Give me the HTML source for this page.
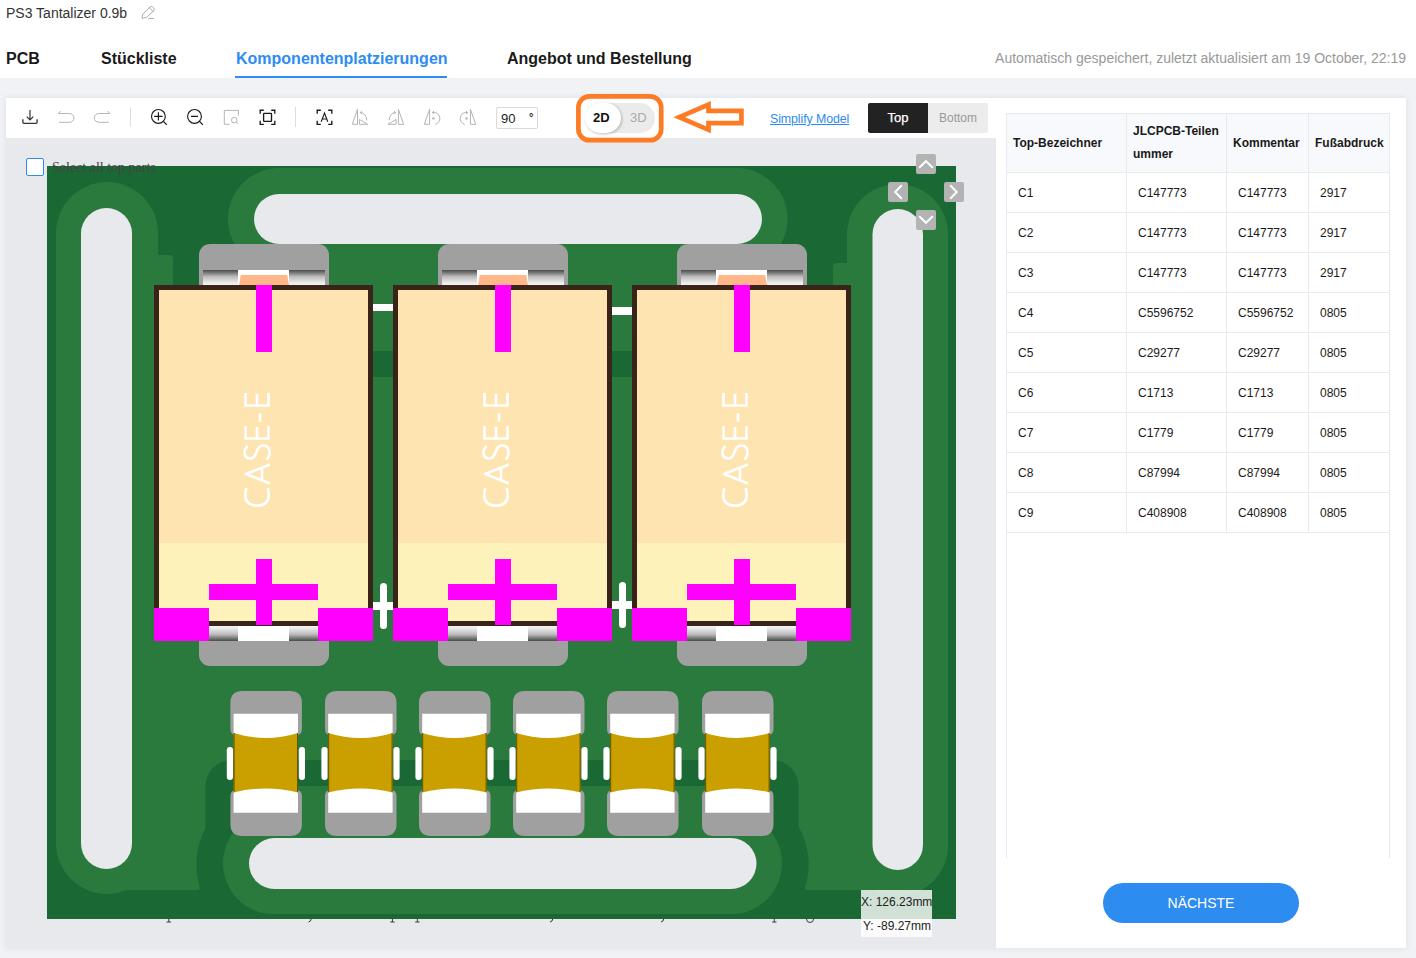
<!DOCTYPE html>
<html><head><meta charset="utf-8">
<style>
*{margin:0;padding:0;box-sizing:border-box}
html,body{width:1416px;height:958px;overflow:hidden;background:#f0f2f5;font-family:"Liberation Sans",sans-serif;color:#1a1a1a}
.a{position:absolute;white-space:nowrap}
#hdr{position:absolute;left:0;top:0;width:1416px;height:78px;background:#fff}
.tab{position:absolute;top:50px;font-size:16px;font-weight:bold;color:#1a1a1a;line-height:18px}
#tb{position:absolute;left:6px;top:98px;width:990px;height:40px;background:#fff}
#rp{position:absolute;left:996px;top:98px;width:410px;height:850px;background:#fff}
#cv{position:absolute;left:6px;top:138px;width:990px;height:810px;background:#e8e9ed}
table{border-collapse:collapse;position:absolute;left:10px;top:15px;width:383px;table-layout:fixed}
th,td{border:1px solid #e8eaec;text-align:left;font-size:12px}
th{background:#f7f9fc;font-weight:bold;height:59px;padding:0 6px;line-height:23px;vertical-align:middle}
td{height:40px;padding:0 0 0 11px}
</style></head><body>
<div id="hdr">
  <div class="a" style="left:6px;top:5px;font-size:14px;color:#333;line-height:16px">PS3 Tantalizer 0.9b</div>
  <svg class="a" style="left:136px;top:0px" width="24" height="24" viewBox="136 0 24 24"><path d="M142 18.2 L142.6 14.4 L150 7 Q151.4 5.8 152.7 7 L153.8 8.1 Q155 9.4 153.8 10.6 L146.3 17.6 Z M149.3 7.7 L153.1 11.5 M148.4 18.5 H153.8" fill="none" stroke="#ababab" stroke-width="1"/></svg>
  <div class="tab" style="left:6px">PCB</div>
  <div class="tab" style="left:101px">Stückliste</div>
  <div class="tab" style="left:236px;color:#2d8cf0">Komponentenplatzierungen</div>
  <div class="a" style="left:235px;top:76px;width:212px;height:2px;background:#2d8cf0"></div>
  <div class="tab" style="left:507px">Angebot und Bestellung</div>
  <div class="a" style="right:10px;top:50px;font-size:14px;color:#999;line-height:16px">Automatisch gespeichert, zuletzt aktualisiert am 19 October, 22:19</div>
</div>
<div class="a" style="left:6px;top:98px;width:990px;height:850px;box-shadow:0 0 7px rgba(10,30,80,0.09)"></div>
<div class="a" style="left:996px;top:98px;width:410px;height:850px;box-shadow:0 0 7px rgba(10,30,80,0.09)"></div>
<div id="tb">
<svg class="a" style="left:0;top:0" width="990" height="40" viewBox="6 98 990 40">
<g fill="none" stroke="#333" stroke-width="1.2">
<path d="M30 110 V120.3 M26.7 116.6 L30 119.9 L33.3 116.6"/>
<path d="M22.9 119.2 V122.3 Q22.9 123.4 24 123.4 H36 Q37.1 123.4 37.1 122.3 V119.2" stroke-width="1.3"/>
</g>
<g fill="none" stroke="#b4b4b4" stroke-width="1">
<path d="M60.8 111 L58.3 113.5 H69.5 A4.4 4.4 0 0 1 69.5 122.3 H59"/>
<path d="M107.4 111 L109.9 113.5 H98.7 A4.4 4.4 0 0 0 98.7 122.3 H108.8"/>
</g>
<rect x="130" y="107.5" width="1" height="19" fill="#ddd"/>
<rect x="295" y="107" width="1" height="20" fill="#ddd"/>
<g fill="none" stroke="#1a1a1a" stroke-width="1.15">
<circle cx="158.4" cy="116.4" r="6.9"/><path d="M163.5 121.5 L166.8 124.8 M154.2 116.4 H162.6 M158.4 112.2 V120.6"/>
<circle cx="194.5" cy="116.4" r="6.9"/><path d="M199.6 121.5 L202.9 124.8 M191 116.4 H198"/>
</g>
<g fill="none" stroke="#1a1a1a" stroke-width="1.35">
<path d="M260.2 113.8 V110.2 H263.8 M271.2 110.2 H274.8 V113.8 M274.8 120.8 V124.4 H271.2 M263.8 124.4 H260.2 V120.8"/>
<rect x="263.6" y="113.4" width="7.9" height="8" rx="0.6"/>
<path d="M317.2 113.8 V110.2 H320.8 M328.2 110.2 H331.8 V113.8 M331.8 120.8 V124.4 H328.2 M320.8 124.4 H317.2 V120.8"/>
<path d="M321.2 121.8 L324.5 113 L327.8 121.8 M322.3 119 H326.7" stroke-width="1.1"/>
</g>
<g fill="none" stroke="#b4b4b4" stroke-width="1">
<path d="M224.3 124.3 V110.4 H238.5 V115.5 M224.3 124.3 H229.4"/><circle cx="234.3" cy="120.1" r="2.8"/><path d="M236.3 122.1 L238.5 124.3"/>
<path d="M357.5 109.3 L352.3 124.3 H357.5 Z M359.4 119.4 V124.3 H367.6 Z M366.7 120.3 A6 7.5 0 0 0 360.2 112.6 M360.2 112.6 L361.8 111 M360.2 112.6 L362.2 113.8"/>
<path d="M398.4 109.3 L403.6 124.3 H398.4 Z M396 119.4 V124.3 H388 Z M389.2 120.3 A6 7.5 0 0 1 395.7 112.6 M395.7 112.6 L394.1 111 M395.7 112.6 L393.7 113.8"/>
<path d="M429.6 109.3 L424.3 124.3 H429.6 Z M432.3 112.6 A5.8 5.8 0 0 1 435.3 124.3 M432.3 112.6 L434 111 M432.3 112.6 L434.2 114"/>
<path d="M470.4 109.3 L475.7 124.3 H470.4 Z M467.7 112.6 A5.8 5.8 0 0 0 464.7 124.3 M467.7 112.6 L466 111 M467.7 112.6 L465.8 114"/>
</g>
<circle cx="433.4" cy="118.4" r="1.2" fill="#b4b4b4"/>
<circle cx="466.6" cy="118.4" r="1.2" fill="#b4b4b4"/>
</svg>
<div class="a" style="left:490px;top:9px;width:42px;height:22px;border:1px solid #d9d9d9;border-radius:2px;font-size:13px;line-height:22px;padding-left:4px;color:#222">90</div>
<div class="a" style="left:523px;top:13px;font-size:11px;font-weight:bold;color:#222">°</div>
<div class="a" style="left:579px;top:5px;width:70px;height:30px;border-radius:15px;background:#ebebeb"></div>
<div class="a" style="left:579px;top:5px;width:36px;height:30px;border-radius:15px;background:#fff;box-shadow:1px 1px 3px rgba(0,0,0,0.25)"></div>
<div class="a" style="left:587px;top:12px;font-size:13px;font-weight:bold;color:#111;line-height:15px">2D</div>
<div class="a" style="left:624px;top:12px;font-size:13px;color:#aaa;line-height:15px">3D</div>

<div class="a" style="left:764px;top:14px;font-size:12.4px;letter-spacing:-0.1px;color:#2d8cf0;text-decoration:underline;line-height:15px">Simplify Model</div>
<div class="a" style="left:862px;top:5px;width:60px;height:30px;background:#222;border-radius:2px 0 0 2px;color:#fff;font-size:13px;font-weight:normal;-webkit-text-stroke:0.25px #fff;text-align:center;line-height:30px">Top</div>
<div class="a" style="left:922px;top:5px;width:60px;height:30px;background:#ececec;border-radius:0 2px 2px 0;color:#999;font-size:12px;text-align:center;line-height:30px">Bottom</div>
</div>
<div id="cv"></div>
<svg class="a" style="left:140px;top:915px" width="700" height="12" viewBox="140 915 700 12"><g fill="none" stroke="#3a3a3a" stroke-width="1">
<path d="M168.8 918 V922 M166.6 922 H171"/>
<path d="M417.4 918 V922 M415.2 922 H419.6"/><path d="M392.4 918 V922 M390.2 922 H394.6"/>
<path d="M774.3 918 V922 M772.1 922 H776.5"/>
<path d="M311.5 918 Q311 922 308.5 922"/><path d="M553 918 Q552.5 922 550 922"/><path d="M664 918 Q663.5 922 661 922"/>
<path d="M806.5 919 Q806.5 922.5 810 922.5 Q813.5 922.5 813.5 919"/>
</g></svg>
<svg class="a" style="left:6px;top:138px" width="990" height="810" viewBox="6 138 990 810"><defs>
<linearGradient id="gt" x1="0" y1="0" x2="0" y2="1"><stop offset="0" stop-color="#4a4a4a"/><stop offset="0.45" stop-color="#bdbdbd"/><stop offset="0.85" stop-color="#ebebeb"/><stop offset="1" stop-color="#f4f4f4"/></linearGradient>
<linearGradient id="gb" x1="0" y1="1" x2="0" y2="0"><stop offset="0" stop-color="#4a4a4a"/><stop offset="0.45" stop-color="#bdbdbd"/><stop offset="0.85" stop-color="#ebebeb"/><stop offset="1" stop-color="#f4f4f4"/></linearGradient>
</defs><rect x="47" y="166" width="909" height="753" fill="#1a6833" /><rect x="158" y="285" width="689" height="605" fill="#2b7a3d" /><rect x="107" y="843" width="790" height="47" fill="#2b7a3d" /><path d="M158 285 V255 H169 Q173 255 173 259 V285 Z" fill="#2b7a3d"/><path d="M847 285 V263 H837 Q833 263 833 267 V285 Z" fill="#2b7a3d"/><rect x="212" y="244" width="581" height="41" fill="#2b7a3d" /><rect x="373" y="351" width="20" height="26" fill="#1a6833" /><rect x="612" y="351" width="20" height="26" fill="#1a6833" /><rect x="231" y="760" width="542" height="26" fill="#1a6833" /><path d="M231.5 760 H240 V918 H199 V890 L200 888 A77 77 0 0 1 205.5 828 V786 A26 26 0 0 1 231.5 760 Z" fill="#1a6833"/><path d="M772.5 760 H765 V918 H806 V890 L805 888 A77 77 0 0 0 798.5 826.5 V786 A26 26 0 0 0 772.5 760 Z" fill="#1a6833"/><rect x="56" y="182" width="102" height="712" rx="51.0" fill="#2b7a3d"/><rect x="228" y="168" width="559.5" height="102" rx="51.0" fill="#2b7a3d"/><rect x="847" y="184" width="101" height="712" rx="50.5" fill="#2b7a3d"/><rect x="223" y="812.5" width="559" height="101.5" rx="50.75" fill="#2b7a3d"/><rect x="81" y="208" width="51" height="661" rx="25.5" fill="#e8e9ed"/><rect x="254" y="194" width="508" height="50" rx="25.0" fill="#e8e9ed"/><rect x="872.5" y="209" width="50.5" height="661" rx="25.25" fill="#e8e9ed"/><rect x="249" y="838" width="507.5" height="51" rx="25.5" fill="#e8e9ed"/><g transform="translate(0 0)"><rect x="199" y="244" width="130" height="60" rx="11" fill="#a0a0a0"/><rect x="199" y="606" width="130" height="60" rx="11" fill="#a0a0a0"/><rect x="203" y="270" width="35" height="15" fill="url(#gt)" /><rect x="289" y="270" width="36" height="15" fill="url(#gt)" /><rect x="238" y="270" width="51" height="15" fill="#fff" /><path d="M240.8 275 H287.2 L289 285 H239 Z" fill="#ffb78a"/><rect x="209" y="626" width="29" height="15" fill="url(#gb)" /><rect x="289" y="626" width="29" height="15" fill="url(#gb)" /><rect x="238" y="626" width="51" height="15" fill="#fff" /><rect x="154" y="285" width="219" height="341" fill="#3a241a" /><rect x="159" y="290" width="209" height="253" fill="#fee4b0" /><rect x="159" y="543" width="209" height="78" fill="#fef2bb" /><rect x="256" y="285" width="16" height="67" fill="#ff00ff" /><rect x="209" y="584" width="109" height="16" fill="#ff00ff" /><rect x="256" y="559" width="16" height="66" fill="#ff00ff" /><rect x="154" y="608" width="55" height="33" fill="#ff00ff" /><rect x="318" y="608" width="55" height="33" fill="#ff00ff" /><g transform="translate(244 507) rotate(-90)"><g fill="none" stroke="#fff" stroke-width="2.7" stroke-linejoin="round">
<path d="M18.8 2.4 C17 1.6 14 1.3 11 1.3 C5 1.3 1.3 6 1.3 13 C1.3 20 5 24.7 11 24.7 C14 24.7 17 24.4 18.8 23.6"/>
<path d="M23.5 26 L33 2 L42.5 26 M26.5 18 L39.5 18"/>
<path d="M61 3.5 C59 1.5 56.5 0.5 54.5 0.5 C50.5 0.5 48.5 3 48.5 6.5 C48.5 14 61.5 11 61.5 19 C61.5 23 59 25.5 54.5 25.5 C51.5 25.5 49 24.5 47.5 22.5"/>
<path d="M81 1.5 L68.5 1.5 L68.5 24.5 L81 24.5 M68.5 13 L80 13"/>
<path d="M85.3 16 L93.7 16"/>
<path d="M114 1.5 L101.5 1.5 L101.5 24.5 L114 24.5 M101.5 13 L113 13"/>
</g></g><rect x="373" y="304" width="20" height="7" fill="#fff" /><rect x="380" y="583" width="7" height="46" rx="3.5" fill="#fff"/><rect x="373" y="602" width="20" height="8" fill="#fff" /></g><g transform="translate(239 0)"><rect x="199" y="244" width="130" height="60" rx="11" fill="#a0a0a0"/><rect x="199" y="606" width="130" height="60" rx="11" fill="#a0a0a0"/><rect x="203" y="270" width="35" height="15" fill="url(#gt)" /><rect x="289" y="270" width="36" height="15" fill="url(#gt)" /><rect x="238" y="270" width="51" height="15" fill="#fff" /><path d="M240.8 275 H287.2 L289 285 H239 Z" fill="#ffb78a"/><rect x="209" y="626" width="29" height="15" fill="url(#gb)" /><rect x="289" y="626" width="29" height="15" fill="url(#gb)" /><rect x="238" y="626" width="51" height="15" fill="#fff" /><rect x="154" y="285" width="219" height="341" fill="#3a241a" /><rect x="159" y="290" width="209" height="253" fill="#fee4b0" /><rect x="159" y="543" width="209" height="78" fill="#fef2bb" /><rect x="256" y="285" width="16" height="67" fill="#ff00ff" /><rect x="209" y="584" width="109" height="16" fill="#ff00ff" /><rect x="256" y="559" width="16" height="66" fill="#ff00ff" /><rect x="154" y="608" width="55" height="33" fill="#ff00ff" /><rect x="318" y="608" width="55" height="33" fill="#ff00ff" /><g transform="translate(244 507) rotate(-90)"><g fill="none" stroke="#fff" stroke-width="2.7" stroke-linejoin="round">
<path d="M18.8 2.4 C17 1.6 14 1.3 11 1.3 C5 1.3 1.3 6 1.3 13 C1.3 20 5 24.7 11 24.7 C14 24.7 17 24.4 18.8 23.6"/>
<path d="M23.5 26 L33 2 L42.5 26 M26.5 18 L39.5 18"/>
<path d="M61 3.5 C59 1.5 56.5 0.5 54.5 0.5 C50.5 0.5 48.5 3 48.5 6.5 C48.5 14 61.5 11 61.5 19 C61.5 23 59 25.5 54.5 25.5 C51.5 25.5 49 24.5 47.5 22.5"/>
<path d="M81 1.5 L68.5 1.5 L68.5 24.5 L81 24.5 M68.5 13 L80 13"/>
<path d="M85.3 16 L93.7 16"/>
<path d="M114 1.5 L101.5 1.5 L101.5 24.5 L114 24.5 M101.5 13 L113 13"/>
</g></g><rect x="373" y="307" width="20" height="8" fill="#fff" /><rect x="380" y="582" width="7" height="46" rx="3.5" fill="#fff"/><rect x="373" y="601" width="20" height="8" fill="#fff" /></g><g transform="translate(478 0)"><rect x="199" y="244" width="130" height="60" rx="11" fill="#a0a0a0"/><rect x="199" y="606" width="130" height="60" rx="11" fill="#a0a0a0"/><rect x="203" y="270" width="35" height="15" fill="url(#gt)" /><rect x="289" y="270" width="36" height="15" fill="url(#gt)" /><rect x="238" y="270" width="51" height="15" fill="#fff" /><path d="M240.8 275 H287.2 L289 285 H239 Z" fill="#ffb78a"/><rect x="209" y="626" width="29" height="15" fill="url(#gb)" /><rect x="289" y="626" width="29" height="15" fill="url(#gb)" /><rect x="238" y="626" width="51" height="15" fill="#fff" /><rect x="154" y="285" width="219" height="341" fill="#3a241a" /><rect x="159" y="290" width="209" height="253" fill="#fee4b0" /><rect x="159" y="543" width="209" height="78" fill="#fef2bb" /><rect x="256" y="285" width="16" height="67" fill="#ff00ff" /><rect x="209" y="584" width="109" height="16" fill="#ff00ff" /><rect x="256" y="559" width="16" height="66" fill="#ff00ff" /><rect x="154" y="608" width="55" height="33" fill="#ff00ff" /><rect x="318" y="608" width="55" height="33" fill="#ff00ff" /><g transform="translate(244 507) rotate(-90)"><g fill="none" stroke="#fff" stroke-width="2.7" stroke-linejoin="round">
<path d="M18.8 2.4 C17 1.6 14 1.3 11 1.3 C5 1.3 1.3 6 1.3 13 C1.3 20 5 24.7 11 24.7 C14 24.7 17 24.4 18.8 23.6"/>
<path d="M23.5 26 L33 2 L42.5 26 M26.5 18 L39.5 18"/>
<path d="M61 3.5 C59 1.5 56.5 0.5 54.5 0.5 C50.5 0.5 48.5 3 48.5 6.5 C48.5 14 61.5 11 61.5 19 C61.5 23 59 25.5 54.5 25.5 C51.5 25.5 49 24.5 47.5 22.5"/>
<path d="M81 1.5 L68.5 1.5 L68.5 24.5 L81 24.5 M68.5 13 L80 13"/>
<path d="M85.3 16 L93.7 16"/>
<path d="M114 1.5 L101.5 1.5 L101.5 24.5 L114 24.5 M101.5 13 L113 13"/>
</g></g></g><g transform="translate(230.4 0)"><path d="M0 703 Q0 691 12 691 H59.5 Q71.5 691 71.5 703 V729 Q71.5 735 65.5 735 H6 Q0 735 0 729 Z" fill="#a0a0a0"/><path d="M0 796 Q0 790 6 790 H65.5 Q71.5 790 71.5 796 V824 Q71.5 836 59.5 836 H12 Q0 836 0 824 Z" fill="#a0a0a0"/><rect x="3.2" y="733" width="64.4" height="59.5" fill="#c9a000"/><path d="M3.2 713.7 H67.6 V733 Q35.4 743 3.2 733 Z" fill="#fff"/><path d="M3.7 733 V792.5" stroke="#6b5200" stroke-width="1"/><path d="M67.1 733 V792.5" stroke="#6b5200" stroke-width="1"/><path d="M3.2 792.5 Q35.4 784.5 67.6 792.5 V812.8 H3.2 Z" fill="#fff"/><rect x="-3.6" y="747" width="6.2" height="33" rx="3" fill="#fff"/><rect x="68.4" y="747" width="6.2" height="33" rx="3" fill="#fff"/></g><g transform="translate(325.0 0)"><path d="M0 703 Q0 691 12 691 H59.5 Q71.5 691 71.5 703 V729 Q71.5 735 65.5 735 H6 Q0 735 0 729 Z" fill="#a0a0a0"/><path d="M0 796 Q0 790 6 790 H65.5 Q71.5 790 71.5 796 V824 Q71.5 836 59.5 836 H12 Q0 836 0 824 Z" fill="#a0a0a0"/><rect x="3.2" y="733" width="64.4" height="59.5" fill="#c9a000"/><path d="M3.2 713.7 H67.6 V733 Q35.4 743 3.2 733 Z" fill="#fff"/><path d="M3.7 733 V792.5" stroke="#6b5200" stroke-width="1"/><path d="M67.1 733 V792.5" stroke="#6b5200" stroke-width="1"/><path d="M3.2 792.5 Q35.4 784.5 67.6 792.5 V812.8 H3.2 Z" fill="#fff"/><rect x="-3.6" y="747" width="6.2" height="33" rx="3" fill="#fff"/><rect x="68.4" y="747" width="6.2" height="33" rx="3" fill="#fff"/></g><g transform="translate(419.0 0)"><path d="M0 703 Q0 691 12 691 H59.5 Q71.5 691 71.5 703 V729 Q71.5 735 65.5 735 H6 Q0 735 0 729 Z" fill="#a0a0a0"/><path d="M0 796 Q0 790 6 790 H65.5 Q71.5 790 71.5 796 V824 Q71.5 836 59.5 836 H12 Q0 836 0 824 Z" fill="#a0a0a0"/><rect x="3.2" y="733" width="64.4" height="59.5" fill="#c9a000"/><path d="M3.2 713.7 H67.6 V733 Q35.4 743 3.2 733 Z" fill="#fff"/><path d="M3.7 733 V792.5" stroke="#6b5200" stroke-width="1"/><path d="M67.1 733 V792.5" stroke="#6b5200" stroke-width="1"/><path d="M3.2 792.5 Q35.4 784.5 67.6 792.5 V812.8 H3.2 Z" fill="#fff"/><rect x="-3.6" y="747" width="6.2" height="33" rx="3" fill="#fff"/><rect x="68.4" y="747" width="6.2" height="33" rx="3" fill="#fff"/></g><g transform="translate(513.0 0)"><path d="M0 703 Q0 691 12 691 H59.5 Q71.5 691 71.5 703 V729 Q71.5 735 65.5 735 H6 Q0 735 0 729 Z" fill="#a0a0a0"/><path d="M0 796 Q0 790 6 790 H65.5 Q71.5 790 71.5 796 V824 Q71.5 836 59.5 836 H12 Q0 836 0 824 Z" fill="#a0a0a0"/><rect x="3.2" y="733" width="64.4" height="59.5" fill="#c9a000"/><path d="M3.2 713.7 H67.6 V733 Q35.4 743 3.2 733 Z" fill="#fff"/><path d="M3.7 733 V792.5" stroke="#6b5200" stroke-width="1"/><path d="M67.1 733 V792.5" stroke="#6b5200" stroke-width="1"/><path d="M3.2 792.5 Q35.4 784.5 67.6 792.5 V812.8 H3.2 Z" fill="#fff"/><rect x="-3.6" y="747" width="6.2" height="33" rx="3" fill="#fff"/><rect x="68.4" y="747" width="6.2" height="33" rx="3" fill="#fff"/></g><g transform="translate(607.0 0)"><path d="M0 703 Q0 691 12 691 H59.5 Q71.5 691 71.5 703 V729 Q71.5 735 65.5 735 H6 Q0 735 0 729 Z" fill="#a0a0a0"/><path d="M0 796 Q0 790 6 790 H65.5 Q71.5 790 71.5 796 V824 Q71.5 836 59.5 836 H12 Q0 836 0 824 Z" fill="#a0a0a0"/><rect x="3.2" y="733" width="64.4" height="59.5" fill="#c9a000"/><path d="M3.2 713.7 H67.6 V733 Q35.4 743 3.2 733 Z" fill="#fff"/><path d="M3.7 733 V792.5" stroke="#6b5200" stroke-width="1"/><path d="M67.1 733 V792.5" stroke="#6b5200" stroke-width="1"/><path d="M3.2 792.5 Q35.4 784.5 67.6 792.5 V812.8 H3.2 Z" fill="#fff"/><rect x="-3.6" y="747" width="6.2" height="33" rx="3" fill="#fff"/><rect x="68.4" y="747" width="6.2" height="33" rx="3" fill="#fff"/></g><g transform="translate(702.0 0)"><path d="M0 703 Q0 691 12 691 H59.5 Q71.5 691 71.5 703 V729 Q71.5 735 65.5 735 H6 Q0 735 0 729 Z" fill="#a0a0a0"/><path d="M0 796 Q0 790 6 790 H65.5 Q71.5 790 71.5 796 V824 Q71.5 836 59.5 836 H12 Q0 836 0 824 Z" fill="#a0a0a0"/><rect x="3.2" y="733" width="64.4" height="59.5" fill="#c9a000"/><path d="M3.2 713.7 H67.6 V733 Q35.4 743 3.2 733 Z" fill="#fff"/><path d="M3.7 733 V792.5" stroke="#6b5200" stroke-width="1"/><path d="M67.1 733 V792.5" stroke="#6b5200" stroke-width="1"/><path d="M3.2 792.5 Q35.4 784.5 67.6 792.5 V812.8 H3.2 Z" fill="#fff"/><rect x="-3.6" y="747" width="6.2" height="33" rx="3" fill="#fff"/><rect x="68.4" y="747" width="6.2" height="33" rx="3" fill="#fff"/></g><rect x="916" y="154" width="20" height="20" rx="2" fill="#b3b3b3"/><path d="M919.2 167.8 L926 161.2 L932.8 167.8" fill="none" stroke="#fff" stroke-width="2"/><rect x="916" y="210" width="20" height="20" rx="2" fill="#b3b3b3"/><path d="M919.2 216.2 L926 222.8 L932.8 216.2" fill="none" stroke="#fff" stroke-width="2"/><rect x="888" y="182" width="20" height="20" rx="2" fill="#b3b3b3"/><path d="M901.8 185.2 L895.2 192 L901.8 198.8" fill="none" stroke="#fff" stroke-width="2"/><rect x="944" y="182" width="20" height="20" rx="2" fill="#b3b3b3"/><path d="M950.2 185.2 L956.8 192 L950.2 198.8" fill="none" stroke="#fff" stroke-width="2"/></svg>
<div class="a" style="left:26px;top:158px;width:18px;height:18px;border:1.5px solid #2d8cf0;border-radius:2px;background:#fff"></div>
<div class="a" style="left:52px;top:159px;font-family:'Liberation Serif',serif;font-size:14px;color:#444;line-height:17px">Select all top parts</div>
<div class="a" style="left:861px;top:890px;width:71px;height:47px;background:rgba(255,255,255,0.8)"></div>
<div class="a" style="left:861px;top:895px;font-size:12px;color:#222;line-height:14px">X: 126.23mm</div>
<div class="a" style="left:863px;top:919px;font-size:12px;color:#222;line-height:14px">Y: -89.27mm</div>
<div id="rp">
<table>
<colgroup><col style="width:120px"><col style="width:100px"><col style="width:82px"><col style="width:81px"></colgroup>
<tr><th>Top-Bezeichner</th><th>JLCPCB-Teilen<br>ummer</th><th>Kommentar</th><th>Fußabdruck</th></tr>
<tr><td>C1</td><td>C147773</td><td>C147773</td><td>2917</td></tr>
<tr><td>C2</td><td>C147773</td><td>C147773</td><td>2917</td></tr>
<tr><td>C3</td><td>C147773</td><td>C147773</td><td>2917</td></tr>
<tr><td>C4</td><td>C5596752</td><td>C5596752</td><td>0805</td></tr>
<tr><td>C5</td><td>C29277</td><td>C29277</td><td>0805</td></tr>
<tr><td>C6</td><td>C1713</td><td>C1713</td><td>0805</td></tr>
<tr><td>C7</td><td>C1779</td><td>C1779</td><td>0805</td></tr>
<tr><td>C8</td><td>C87994</td><td>C87994</td><td>0805</td></tr>
<tr><td>C9</td><td>C408908</td><td>C408908</td><td>0805</td></tr>
</table>
<div class="a" style="left:10px;top:434px;width:384px;height:326px;border-left:1px solid #e8eaec;border-right:1px solid #e8eaec"></div>
<div class="a" style="left:107px;top:785px;width:196px;height:40px;border-radius:20px;background:#2d8cf0;color:#fff;font-size:14px;text-align:center;line-height:40px">NÄCHSTE</div>
</div>
<svg class="a" style="left:570px;top:90px" width="180" height="56" viewBox="570 90 180 56">
<rect x="578.4" y="96.4" width="82.8" height="43.8" rx="11" fill="none" stroke="#fd7b25" stroke-width="4.7"/>
<path d="M679.3 117.2 L708.5 104.6 V110.8 H741.4 V123.2 H708.5 V129.8 Z" fill="none" stroke="#fd7b25" stroke-width="4.7" stroke-linejoin="miter"/>
</svg>
</body></html>
